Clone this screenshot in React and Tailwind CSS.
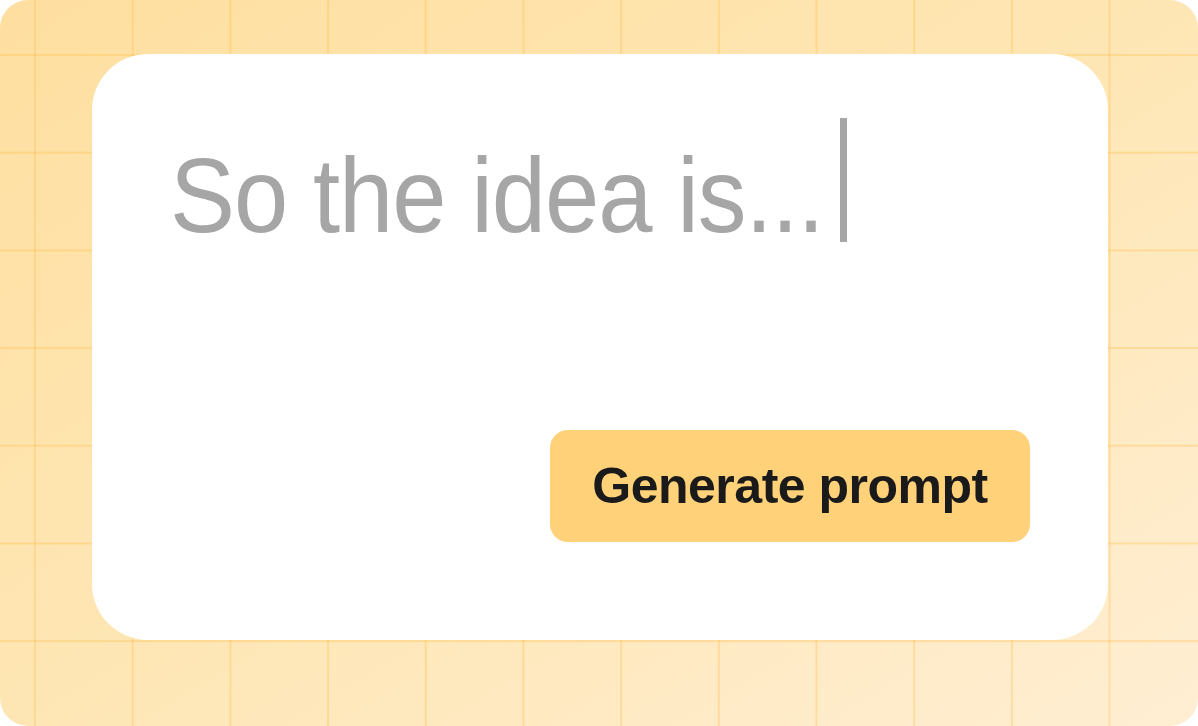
export default function App() {
  return (
    <div className="w-[1198px] h-[726px] bg-white">
      <div className="w-[1198px] h-[726px] rounded-[28px] overflow-hidden bg-linear-to-br from-[#fedfa0] via-[#fee6b4] to-[#ffeed3]">
        <div className="w-full h-full pt-[54px] pl-[92px] bg-[linear-gradient(to_right,rgba(255,188,70,0.32)_2px,transparent_2px),linear-gradient(to_bottom,rgba(255,188,70,0.32)_2px,transparent_2px)] bg-[size:97.7px_97.7px] bg-[position:34px_54px]">
          <div className="w-[1016px] h-[586px] bg-white rounded-[56px] flex flex-col justify-between pt-[88px] pl-[78px] pr-[78px] pb-[98px]">
            <div className="flex items-start">
              <span
                className="inline-block whitespace-nowrap origin-left scale-x-[0.92] -mr-[57px] text-[106px] leading-none text-[#a6a6a6] tracking-[-1.2px]"
                style={{ fontFamily: '"Liberation Sans", Arial, sans-serif' }}
              >
                So the idea is...
              </span>
              <span className="block w-[7px] h-[124px] -mt-[24px] ml-[17px] bg-[#a6a6a6]" />
            </div>
            <div className="flex justify-end">
              <button
                className="w-[480px] h-[112px] rounded-[18px] bg-[#ffd179] flex items-center justify-center text-[50px] font-bold text-[#1a1a1a] tracking-[-0.5px]"
                style={{ fontFamily: '"Liberation Sans", Arial, sans-serif' }}
              >
                Generate prompt
              </button>
            </div>
          </div>
        </div>
      </div>
    </div>
  );
}
